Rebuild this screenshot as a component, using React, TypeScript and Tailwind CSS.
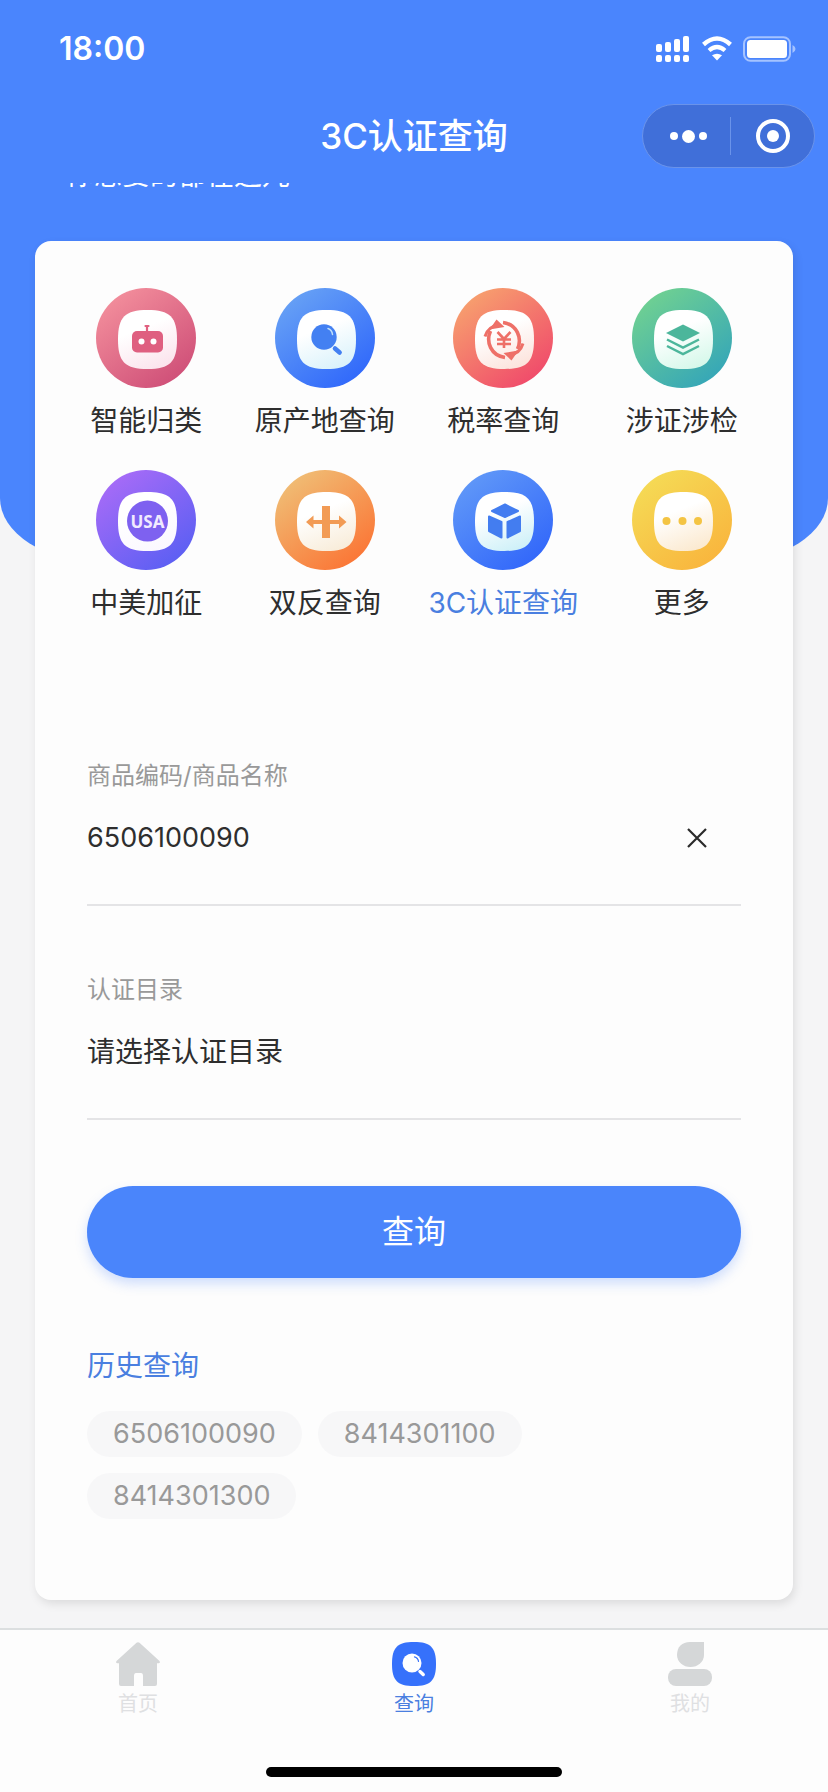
import { useState } from "react";
import type { ReactNode } from "react";

type BadgeProps = { id: string; from: string; to: string; tint: string; children: ReactNode };

function Badge({ id, from, to, tint, children }: BadgeProps) {
  return (
    <svg viewBox="0 0 100 100" className="size-[100px]" aria-hidden="true">
      <defs>
        <linearGradient id={id} x1="0.15" y1="0.1" x2="0.8" y2="0.95">
          <stop offset="0" stopColor={from} />
          <stop offset="1" stopColor={to} />
        </linearGradient>
        <linearGradient id={id + "-in"} x1="0.3" y1="0" x2="0.7" y2="1">
          <stop offset="0.3" stopColor="#fff" />
          <stop offset="1" stopColor={tint} />
        </linearGradient>
      </defs>
      <circle cx="50" cy="50" r="50" fill={`url(#${id})`} />
      <path
        d="M51.500 22C74 22 81 29 81 51.500S74 81 51.500 81 22 74 22 51.500 29 22 51.500 22Z"
        fill={`url(#${id}-in)`}
      />
      {children}
    </svg>
  );
}

const services: { label: string; active?: boolean; icon: ReactNode }[] = [
  {
    label: "智能归类",
    icon: (
      <Badge id="robot" from="#f28d9b" to="#cf4f78" tint="#fbe3ec">
        <path d="M51 44V38M49.500 38h3" stroke="#e0607f" strokeWidth="2.200" strokeLinecap="round" />
        <rect x="36" y="43" width="31" height="21.500" rx="5" fill="#df5f80" />
        <circle cx="45.500" cy="53.500" r="3" fill="#fff" />
        <circle cx="57.500" cy="53.500" r="3" fill="#fff" />
      </Badge>
    ),
  },
  {
    label: "原产地查询",
    icon: (
      <Badge id="origin" from="#66a0f5" to="#3068fb" tint="#d9f2fb">
        <circle cx="49" cy="49" r="12.700" fill="#4380f2" />
        <path d="M53 40.500q4 1.500 4.500 6" stroke="#bfe0fb" strokeWidth="1.500" fill="none" strokeLinecap="round" />
        <path d="M60 60.500l4.600 4" stroke="#4380f2" strokeWidth="4.600" strokeLinecap="round" />
      </Badge>
    ),
  },
  {
    label: "税率查询",
    icon: (
      <Badge id="tax" from="#f79f6e" to="#f04a6b" tint="#fce3dc">
        <g stroke="#ee7068" fill="none">
          <path d="M37.500 43C32.500 54 38 67.500 52 69.500" strokeWidth="3.600" />
          <path d="M32 48.500C34 42 38 38 45 37.500" strokeWidth="3" />
          <path d="M64.500 61C69.500 50 64 36.500 50 34.500" strokeWidth="3.600" />
          <path d="M70 55.500C68 62 64 66 57 66.500" strokeWidth="3" />
          <path d="M44.500 44l6.500 7 6.500-7M51 51v9M44 51.500h14M44 56h14" strokeWidth="2.600" />
        </g>
        <path d="M43.500 31.500l8 7.500-15 2.500ZM58.500 72.500l-8-7.500 15-2.500Z" fill="#ee7068" />
      </Badge>
    ),
  },
  {
    label: "涉证涉检",
    icon: (
      <Badge id="layers" from="#6fd092" to="#35a6b8" tint="#d5f8ea">
        <path d="M51 36.500L68 45 51 53.500 34 45Z" fill="#4cb69b" />
        <path d="M35 51.500l16 8 16-8M35 58l16 8 16-8" stroke="#4cb69b" strokeWidth="2.500" fill="none" />
      </Badge>
    ),
  },
  {
    label: "中美加征",
    icon: (
      <Badge id="usa" from="#a66bf7" to="#5b5ff3" tint="#fbf8ff">
        <circle cx="51.500" cy="51" r="20.500" fill="#7e61f0" />
        <text
          x="51.500"
          y="57.500"
          textAnchor="middle"
          fill="#f1eaff"
          className="font-['Noto_Sans',sans-serif] text-[17px] font-bold"
        >
          USA
        </text>
      </Badge>
    ),
  },
  {
    label: "双反查询",
    icon: (
      <Badge id="dual" from="#f0bc74" to="#fb7535" tint="#f8ecd9">
        <path
          d="M47 36h8v14H64v-4.500l7.500 6.500-7.500 6.500v-4.500h-9v14h-8V54H38.500v4.500L31 52l7.500-6.500v4.500h8.500Z"
          fill="#f29b55"
        />
      </Badge>
    ),
  },
  {
    label: "3C认证查询",
    active: true,
    icon: (
      <Badge id="ccc" from="#5f97f8" to="#3267fa" tint="#cdf0f8">
        <g fill="#437df0" stroke="#437df0" strokeWidth="2" strokeLinejoin="round">
          <path d="M39 41l13-6.500L65 41l-13 6Z" />
          <path d="M36 46.500l12.500 5.500v15.500L36 61Z" />
          <path d="M67 46.500L54.500 52v15.500L67 61Z" />
        </g>
      </Badge>
    ),
  },
  {
    label: "更多",
    icon: (
      <Badge id="more" from="#f5da55" to="#f9b53d" tint="#fbe9cf">
        <g fill="#f4c443">
          <circle cx="34.500" cy="51" r="4" />
          <circle cx="50.500" cy="51" r="4" />
          <circle cx="66" cy="51" r="4" />
        </g>
      </Badge>
    ),
  },
];

const history = ["6506100090", "8414301100", "8414301300"];

function StatusBar() {
  return (
    <div className="flex h-[98px] items-center justify-between pl-[59px] pr-8">
      <span className="text-[32px] leading-10 font-semibold">18:00</span>
      <svg viewBox="0 0 140 26" className="h-[26px] w-[140px]" fill="#fff" aria-hidden="true">
        <rect x="0" y="8" width="6" height="8" rx="2" />
        <rect x="9" y="6" width="6" height="10" rx="2" />
        <rect x="18" y="3" width="6" height="13" rx="2" />
        <rect x="27" y="0" width="6" height="16" rx="2" />
        <rect x="0" y="19" width="6" height="7" rx="2" />
        <rect x="9" y="19" width="6" height="7" rx="2" />
        <rect x="18" y="19" width="6" height="7" rx="2" />
        <rect x="27" y="19" width="6" height="7" rx="2" />
        <path d="M47.500 8.500Q61 -3.500 74.500 8.500" stroke="#fff" strokeWidth="4.400" fill="none" />
        <path d="M53 14.500Q61 7.500 69 14.500" stroke="#fff" strokeWidth="4.200" fill="none" />
        <path d="M56 19.300Q61 16 66 19.300L61 24.500Z" />
        <rect x="88" y="1.200" width="46" height="23.600" rx="6.500" fill="none" stroke="#a5c3ff" strokeWidth="2" />
        <rect x="91" y="4" width="40" height="18" rx="3.500" />
        <path d="M136.500 9q3 1.500 3 4t-3 4Z" fill="#a5c3ff" />
      </svg>
    </div>
  );
}

export default function App() {
  const [code, setCode] = useState("6506100090");

  return (
    <div className="relative isolate flex min-h-screen flex-col bg-[#f5f5f6] font-['Inter','Noto_Sans_CJK_SC',sans-serif] text-[#2e2e2e]">
      <div className="absolute inset-x-0 top-0 -z-10 h-[562px] rounded-b-[100px_64px] bg-[#4a85fd]" />

      <header className="text-white">
        <StatusBar />
        <div className="grid h-[76px] grid-cols-[1fr_auto_1fr] items-center px-[13px]">
          <span />
          <h1 className="text-[35px] leading-[48px] font-medium">3C认证查询</h1>
          <div className="flex h-16 w-[173px] items-center justify-self-end rounded-full border border-[#6a93ea] bg-[#406fd9]">
            <button type="button" aria-label="更多操作" className="flex flex-1 items-center justify-center gap-1 pl-1">
              <span className="size-2 rounded-full bg-white" />
              <span className="size-[13px] rounded-full bg-white" />
              <span className="size-2 rounded-full bg-white" />
            </button>
            <span className="h-[38px] w-px bg-[#6a93ea]" />
            <button type="button" aria-label="关闭" className="flex flex-1 items-center justify-center">
              <span className="flex size-[34px] items-center justify-center rounded-full border-4 border-white">
                <span className="size-3 rounded-full bg-white" />
              </span>
            </button>
          </div>
        </div>
      </header>

      <main className="flex flex-1 flex-col px-[35px] pt-[9px]">
        <div className="flex h-2 items-end overflow-hidden pl-[31px] text-white">
          <p className="text-[28px] leading-8">你想要的都在这儿</p>
        </div>

        <div className="mt-[50px] flex flex-1 flex-col rounded-2xl bg-[#fdfdfd] pb-[76px] shadow-[2px_4px_10px_rgba(0,0,0,0.1)]">
          <nav className="grid grid-cols-4 gap-y-7 px-[22px] pt-[47px]">
            {services.map((s) => (
              <a key={s.label} href="#" className="flex flex-col items-center gap-3">
                {s.icon}
                <span
                  className={
                    s.active
                      ? "text-[28px] leading-[42px] whitespace-nowrap text-[#4a7fe0]"
                      : "text-[28px] leading-[42px] whitespace-nowrap"
                  }
                >
                  {s.label}
                </span>
              </a>
            ))}
          </nav>

          <form className="mt-[134px] px-[52px]" onSubmit={(e) => e.preventDefault()}>
            <div className="border-b-2 border-[#e4e4e6] pb-[46px]">
              <label htmlFor="code" className="block text-2xl leading-9 text-[#999]">
                商品编码/商品名称
              </label>
              <div className="mt-6 flex h-10 items-center justify-between pr-[34px]">
                <input
                  id="code"
                  value={code}
                  onChange={(e) => setCode(e.target.value)}
                  className="min-w-0 flex-1 bg-transparent text-[27px] leading-10 outline-none"
                />
                <button type="button" aria-label="清除" onClick={() => setCode("")}>
                  <svg viewBox="0 0 20 20" className="size-5" stroke="#2a2a2a" strokeWidth="2.200" aria-hidden="true">
                    <path d="M1 1l18 18M19 1L1 19" />
                  </svg>
                </button>
              </div>
            </div>

            <div className="mt-[66px] border-b-2 border-[#e4e4e6] pb-[46px]">
              <label htmlFor="catalog" className="block text-2xl leading-9 text-[#999]">
                认证目录
              </label>
              <select
                id="catalog"
                className="mt-6 block h-10 w-full appearance-none bg-transparent text-[28px] leading-10 outline-none"
              >
                <option>请选择认证目录</option>
              </select>
            </div>

            <button
              type="submit"
              className="mt-[66px] flex h-[92px] w-full items-center justify-center rounded-full bg-[#4a85fb] text-[32px] leading-10 text-white shadow-[0_6px_12px_rgba(74,133,251,0.25)]"
            >
              查询
            </button>
          </form>

          <section className="mt-[67px] px-[52px]">
            <h2 className="text-[28px] leading-[42px] text-[#4a7fe0]">历史查询</h2>
            <div className="mt-6 flex flex-wrap gap-4">
              {history.map((h) => (
                <button
                  key={h}
                  type="button"
                  onClick={() => setCode(h)}
                  className="h-[46px] rounded-full bg-[#f7f7f8] px-[26px] text-[27px] leading-[46px] text-[#999]"
                >
                  {h}
                </button>
              ))}
            </div>
          </section>
        </div>
      </main>

      <footer className="mt-7 border-t-2 border-[#dcdfe0] bg-[#fdfdfd]">
        <nav className="grid grid-cols-3 pt-3 text-xl leading-7 text-[#dfe0e2]">
          <a href="#" className="flex flex-col items-center gap-1">
            <svg viewBox="0 0 44 44" className="size-11" fill="#d5d7d8" aria-hidden="true">
              <path d="M20.500.8q1.500-1.200 3 0L43.500 19q1.200 2-1 2.300H41V42q0 2-2 2H27V34q0-3-2-3h-5q-2 0-2 3v10H5q-2 0-2-2V21.300H1.500Q-.700 21 .500 19Z" />
            </svg>
            首页
          </a>
          <a href="#" className="flex flex-col items-center gap-1 text-[#4a7fe0]">
            <svg viewBox="0 0 44 44" className="size-11" aria-hidden="true">
              <path d="M22 0C38.500 0 44 5.500 44 22S38.500 44 22 44 0 38.500 0 22 5.500 0 22 0Z" fill="#3671fb" />
              <circle cx="20" cy="21" r="9.500" fill="#fff" />
              <path d="M22.500 14.800q3.500 1 4 4.500" stroke="#3671fb" strokeWidth="1.200" fill="none" strokeLinecap="round" />
              <path d="M28 29.500l3.200 3" stroke="#fff" strokeWidth="3.400" strokeLinecap="round" />
            </svg>
            查询
          </a>
          <a href="#" className="flex flex-col items-center gap-1">
            <svg viewBox="0 0 44 44" className="size-11" fill="#d5d7d8" aria-hidden="true">
              <path d="M36 0V13A13.500 12 0 0 1 9 13C9 5 14 0 22 0Z" />
              <rect x="0" y="27" width="44" height="17" rx="8" />
            </svg>
            我的
          </a>
        </nav>
        <div className="mx-auto mt-[49px] mb-[15px] h-[10px] w-[296px] rounded-full bg-black" />
      </footer>
    </div>
  );
}
